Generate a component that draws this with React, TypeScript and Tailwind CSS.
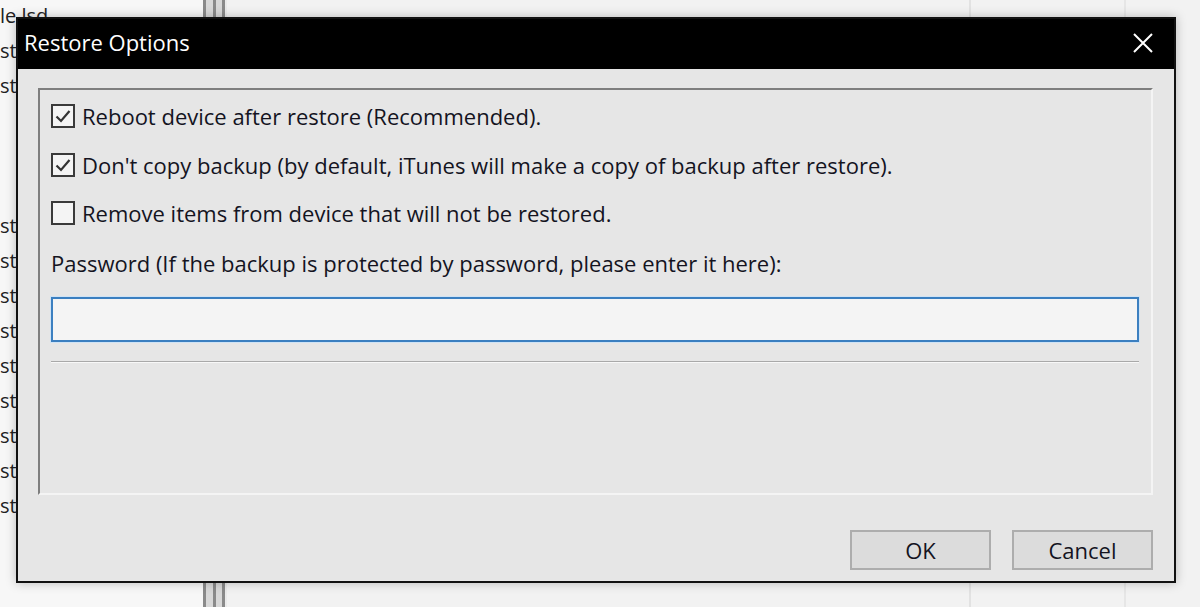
import React from 'react';

const bgRows = ['le.lsd', 'st', 'st', '', '', '', 'st', 'st', 'st', 'st', 'st', 'st', 'st', 'st', 'st'];

const options = [
  { label: 'Reboot device after restore (Recommended).', checked: true },
  { label: "Don't copy backup (by default, iTunes will make a copy of backup after restore).", checked: true },
  { label: 'Remove items from device that will not be restored.', checked: false },
];

function CheckBox({ checked }: { checked: boolean }) {
  return (
    <div className="w-[24px] h-[24px] shrink-0 border-[2px] border-[#3a3a3a] bg-[#f4f4f4] flex items-center justify-center">
      {checked && (
        <svg width="18" height="18" viewBox="0 0 18 18">
          <path d="M2.5 9.5 L7 14 L15.5 4" fill="none" stroke="#333" strokeWidth="2.2" />
        </svg>
      )}
    </div>
  );
}

export default function App() {
  return (
    <div
      className="relative w-[1200px] h-[607px] overflow-hidden bg-[#f3f3f3] flex"
      style={{ fontFamily: '"Open Sans", "Noto Sans", sans-serif' }}
    >
      {/* background window */}
      <div className="w-[203px] bg-[#f7f7f7] -mt-[2px] text-[20px] text-[#222] leading-[35px]">
        {bgRows.map((r, i) => (
          <div key={i} className="h-[35px]">{r || '\u00a0'}</div>
        ))}
      </div>
      <div className="flex w-[24px] bg-[#eaeaea]">
        <div className="w-[3px] bg-[#8a8a8a]" />
        <div className="w-[7px] bg-[#d8d8d8]" />
        <div className="w-[3px] bg-[#8a8a8a]" />
        <div className="w-[6px] bg-[#d8d8d8]" />
        <div className="w-[3px] bg-[#8a8a8a]" />
      </div>
      <div className="flex-1 flex bg-[#f2f2f2]">
        <div className="w-[742px]" />
        <div className="w-[2px] bg-[#e2e2e2]" />
        <div className="w-[153px]" />
        <div className="w-[2px] bg-[#e6e6e6]" />
      </div>

      {/* dialog */}
      <div className="absolute left-[16px] top-[17px] w-[1160px] h-[566px] border-[2px] border-[#111] bg-[#e6e6e6] flex flex-col shadow-[0_0_10px_rgba(0,0,0,0.25)]">
        <div className="h-[50px] bg-black flex items-center justify-between pl-[6px] pr-[20px] pb-[3px]">
          <span className="text-white text-[22px]">Restore Options</span>
          <svg width="22" height="22" viewBox="0 0 22 22">
            <path d="M2 2 L20 20 M20 2 L2 20" stroke="#fff" strokeWidth="2" />
          </svg>
        </div>
        <div className="flex-1 flex flex-col pl-[20px] pr-[21px] pt-[19px] pb-[11px]">
          <div className="h-[407px] border-t-[2px] border-l-[2px] border-[#7e7e7e] border-r-[2px] border-r-[#f4f4f4] border-b-[2px] border-b-[#f4f4f4] pl-[11px] pr-[12px] pt-[14px] flex flex-col text-[22px] text-[#14141f]">
            {options.map((o) => (
              <div key={o.label} className="h-[48.5px] flex items-start gap-[7px]">
                <CheckBox checked={o.checked} />
                <span className="leading-[24px]">{o.label}</span>
              </div>
            ))}
            <div className="leading-[24px] pt-[1px]">Password (If the backup is protected by password, please enter it here):</div>
            <input
              className="mt-[22px] h-[45px] w-full border-[2px] border-[#3b7fc0] bg-[#f4f4f4] outline-none shadow-[0_0_0_1px_#cfe3f5]"
              type="password"
            />
            <div className="mt-[19px] h-[2px] bg-[#a9a9a9] border-b border-b-[#f8f8f8]" />
          </div>
          <div className="mt-auto flex justify-end gap-[21px]">
            <button className="w-[141px] h-[40px] bg-[#dcdcdc] border-[2px] border-[#adadad] text-[22px] text-[#14141f]">OK</button>
            <button className="w-[141px] h-[40px] bg-[#dcdcdc] border-[2px] border-[#adadad] text-[22px] text-[#14141f]">Cancel</button>
          </div>
        </div>
      </div>
    </div>
  );
}
